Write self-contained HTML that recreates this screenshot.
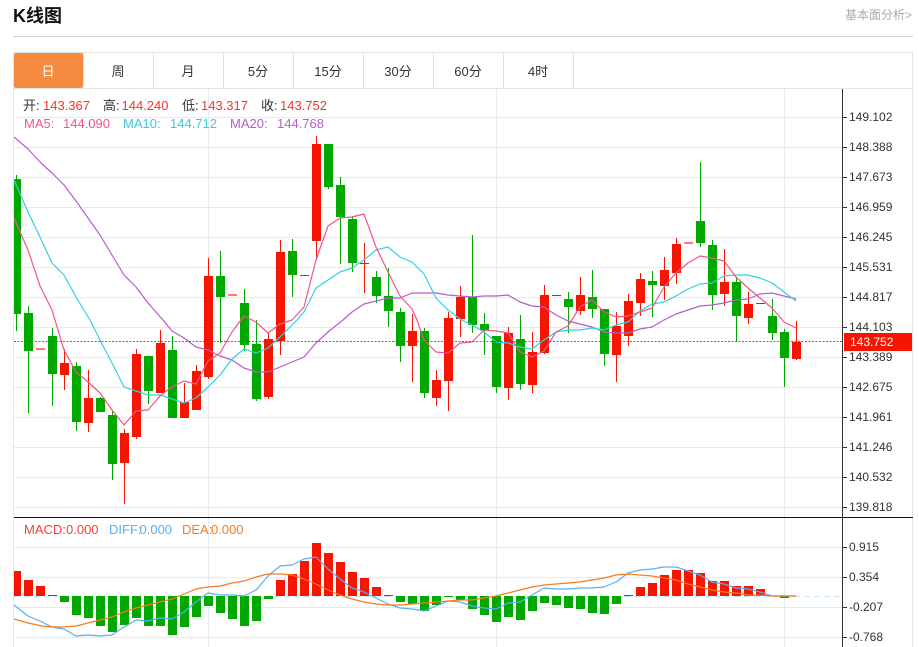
<!DOCTYPE html>
<html lang="zh"><head><meta charset="utf-8"><title>K线图</title>
<style>
html,body{margin:0;padding:0;background:#fff;width:919px;height:647px;overflow:hidden}
svg{display:block;font-family:"Liberation Sans","Noto Sans CJK SC",sans-serif}
.ax text{font-size:12px;fill:#333}
.tb text{font-size:13px;fill:#333;text-anchor:middle}
.l text{font-size:13px}
</style></head><body>
<svg width="919" height="647" viewBox="0 0 919 647" xmlns="http://www.w3.org/2000/svg">
<defs><clipPath id="c"><rect x="14" y="89" width="828" height="558"/></clipPath></defs>
<text x="13" y="22" font-size="18" font-weight="bold" fill="#111">K线图</text>
<text x="845" y="19" font-size="12" fill="#aaa">基本面分析&gt;</text>
<path d="M13 36.500H913" stroke="#d2d2d2" fill="none"/>
<!-- frame and tabs -->
<path d="M13.500 647V52.500H912.500V647M14 88.500H912" stroke="#e3e3e3" fill="none"/>
<rect x="14" y="53" width="69" height="35" rx="2" fill="#f48b40"/>
<path d="M83.500 53V88M153.500 53V88M223.500 53V88M293.500 53V88M363.500 53V88M433.500 53V88M503.500 53V88M573.500 53V88" stroke="#e0e0e0" fill="none"/>
<g class="tb">
<text x="48" y="76" style="fill:#fff">日</text><text x="118" y="76">周</text><text x="188" y="76">月</text><text x="258" y="76">5分</text><text x="328" y="76">15分</text><text x="398" y="76">30分</text><text x="468" y="76">60分</text><text x="538" y="76">4时</text>
</g>
<!-- grid -->
<path d="M14 117.500H842M14 147.500H842M14 177.500H842M14 207.500H842M14 237.500H842M14 267.500H842M14 297.500H842M14 327.500H842M14 357.500H842M14 387.500H842M14 417.500H842M14 447.500H842M14 477.500H842M14 507.500H842M14 547.500H842M14 577.500H842M14 607.500H842M14 637.500H842M208.500 89V647M496.500 89V647M784.500 89V647" stroke="#e4ebf2" fill="none"/>
<g clip-path="url(#c)">
<!-- green wicks -->
<path d="M16.500 175V331M28.500 306V413M52.500 328V406M76.500 362V431M100.500 397V412M112.500 411V480M148.500 356V404M172.500 336V418M220.500 251V343M244.500 289V351M256.500 320V401M292.500 239V297M328.500 144V189M340.500 177V264M352.500 216V272M376.500 271V303M388.500 268V327M400.500 308V362M424.500 328V398M472.500 235V333M484.500 313V355M496.500 336V393M520.500 315V390M568.500 292V333M592.500 270V318M604.500 309V366M652.500 271V317M700.500 162V247M712.500 240V310M736.500 278V342M772.500 299V340M784.500 329V387" stroke="#00a800" fill="none"/>
<!-- red wicks -->
<path d="M64.500 349V390M88.500 370V432M124.500 429V504M136.500 349V439M160.500 330V393M184.500 383V418M196.500 365V410M208.500 258V379M268.500 332V399M280.500 240V355M316.500 136V260M364.500 243V293M412.500 314V382M436.500 370V406M448.500 312V411M460.500 286V337M508.500 327V400M532.500 332V393M544.500 285V354M580.500 277V315M616.500 312V382M628.500 294V346M640.500 273V316M664.500 257V300M676.500 238V284M724.500 249V306M748.500 292V324M796.500 321V360" stroke="#f51500" fill="none"/>
<!-- green bodies -->
<path fill="#00a800" d="M12 179h9v135h-9zM24 313h9v38h-9zM48 336h9v38h-9zM72 366h9v56h-9zM96 398h9v14h-9zM108 415h9v49h-9zM144 356h9v35h-9zM168 350h9v68h-9zM216 276h9v21h-9zM240 303h9v42h-9zM252 344h9v55h-9zM288 251h9v24h-9zM324 144h9v43h-9zM336 185h9v32h-9zM348 219h9v44h-9zM372 277h9v19h-9zM384 296h9v15h-9zM396 312h9v34h-9zM420 331h9v62h-9zM468 297h9v28h-9zM480 324h9v6h-9zM492 336h9v51h-9zM516 339h9v45h-9zM564 299h9v8h-9zM588 297h9v12h-9zM600 309h9v45h-9zM648 281h9v4h-9zM696 221h9v22h-9zM708 245h9v50h-9zM732 282h9v34h-9zM768 316h9v17h-9zM780 332h9v26h-9z"/>
<!-- red bodies -->
<path fill="#f51500" d="M60 363h9v12h-9zM84 398h9v25h-9zM120 433h9v30h-9zM132 354h9v83h-9zM156 343h9v50h-9zM180 402h9v16h-9zM192 371h9v39h-9zM204 276h9v101h-9zM264 339h9v58h-9zM276 252h9v89h-9zM312 144h9v97h-9zM408 331h9v15h-9zM432 380h9v18h-9zM444 318h9v63h-9zM456 297h9v22h-9zM504 333h9v55h-9zM528 352h9v33h-9zM540 295h9v58h-9zM576 295h9v16h-9zM612 326h9v29h-9zM624 301h9v35h-9zM636 279h9v24h-9zM660 270h9v16h-9zM672 244h9v29h-9zM720 282h9v12h-9zM744 304h9v14h-9zM792 342h9v17h-9z"/>
<!-- dojis -->
<path fill="#f77" d="M36 348h9v2h-9zM228 294h9v2h-9zM684 242h9v2h-9z"/>
<path fill="#f51500" d="M300 275h9v1h-9zM360 263h9v1h-9zM552 295h9v1h-9zM756 303h9v1h-9z"/>
<!-- MA lines -->
<g fill="none" stroke-width="1.200" stroke-linejoin="round">
<polyline stroke="#b45fcb" points="14,137 28,149 40,162 52,173 64,185 76,201 88,218 100,235 112,255 124,275 136,287 148,303 163,320 172,331 184,338 196,347 208,350 220,356 232,360 244,368 256,372 268,372 280,367 292,362 304,357 316,343 328,332 343,320 352,312 364,304 376,301 388,298 400,298 412,293 424,293 436,293 448,295 460,296 472,297 484,296 496,296 508,295 520,302 532,306 544,307 556,315 568,321 580,324 592,327 604,332 616,333 628,333 640,329 652,327 664,320 676,314 688,310 700,306 712,305 724,303 736,300 748,299 760,294 772,293 784,296 796,299"/>
<polyline stroke="#36cfe0" points="14,180 28,212 40,237 52,263 64,275 76,297 90,320 100,340 112,363 124,387 136,391 148,395 160,395 172,399 184,403 196,398 208,387 220,375 232,359 244,349 256,353 268,348 280,337 297,320 304,312 316,288 328,280 340,272 352,268 364,260 376,250 388,247 400,257 412,262 424,274 436,298 448,310 460,319 472,325 484,332 496,342 508,343 520,347 532,349 544,340 556,332 568,330 580,330 592,328 604,330 616,325 628,322 640,311 652,304 664,302 676,296 688,289 700,284 712,283 724,276 736,275 748,275 760,278 772,283 784,292 796,301"/>
<polyline stroke="#f0558c" points="14,218 28,250 40,286 52,310 55,320 64,350 76,372 88,382 100,393 112,410 124,425 136,411 148,410 160,396 172,387 184,381 196,384 208,361 220,353 232,332 244,316 256,322 268,333 280,324 292,320 304,307 316,260 328,226 340,218 352,217 364,214 376,247 388,272 400,296 412,309 417,320 424,340 436,352 448,353 460,343 472,342 484,330 496,331 508,333 520,352 532,357 544,351 556,332 568,326 580,307 592,300 604,312 616,317 628,316 640,312 652,308 664,287 676,273 688,263 700,256 712,258 724,261 736,277 748,288 760,298 772,308 784,322 796,328"/>
</g>
<!-- price line -->
<path d="M14 341.500H842" stroke="#f51500" stroke-dasharray="2 1.500" fill="none" opacity=".85"/>
<!-- MACD -->
<path d="M14 596.500H842" stroke="#bfe3f7" stroke-dasharray="6 4" fill="none"/>
<path fill="#f51500" d="M12 571h9v25h-9zM24 580h9v16h-9zM36 586h9v10h-9zM48 595h9v1h-9zM276 580h9v16h-9zM288 574h9v22h-9zM300 561h9v35h-9zM312 543h9v53h-9zM324 553h9v43h-9zM336 562h9v34h-9zM348 572h9v24h-9zM360 578h9v18h-9zM372 587h9v9h-9zM384 595h9v1h-9zM624 595h9v1h-9zM636 587h9v9h-9zM648 583h9v13h-9zM660 575h9v21h-9zM672 570h9v26h-9zM684 570h9v26h-9zM696 573h9v23h-9zM708 581h9v15h-9zM720 581h9v15h-9zM732 586h9v10h-9zM744 586h9v10h-9zM756 589h9v7h-9z"/>
<path fill="#00a800" d="M60 596h9v6h-9zM72 596h9v19h-9zM84 596h9v22h-9zM96 596h9v30h-9zM108 596h9v36h-9zM120 596h9v29h-9zM132 596h9v22h-9zM144 596h9v30h-9zM156 596h9v30h-9zM168 596h9v39h-9zM180 596h9v31h-9zM192 596h9v21h-9zM204 596h9v10h-9zM216 596h9v17h-9zM228 596h9v23h-9zM240 596h9v30h-9zM252 596h9v25h-9zM264 596h9v3h-9zM396 596h9v6h-9zM408 596h9v8h-9zM420 596h9v15h-9zM432 596h9v9h-9zM444 596h9v1h-9zM456 596h9v4h-9zM468 596h9v13h-9zM480 596h9v19h-9zM492 596h9v26h-9zM504 596h9v21h-9zM516 596h9v24h-9zM528 596h9v15h-9zM540 596h9v7h-9zM552 596h9v9h-9zM564 596h9v12h-9zM576 596h9v13h-9zM588 596h9v17h-9zM600 596h9v18h-9zM612 596h9v8h-9zM780 596h9v2h-9z"/>
<g fill="none" stroke-width="1.200" stroke-linejoin="round">
<polyline stroke="#5aaef3" points="14,605 28,616 42,622 52,627 64,629 76,636 88,635 100,636 112,635 124,627 136,620 148,621 160,618 172,619 184,612 196,602 208,593 220,595 232,595 244,596 256,590 268,576 280,566 292,565 304,559 316,557 328,569 340,579 352,588 364,592 376,598 388,604 400,608 412,609 424,611 436,606 448,601 460,602 472,606 484,608 496,609 508,603 520,602 532,595 544,588 556,589 568,589 580,588 592,588 604,587 616,582 628,573 640,570 652,569 664,567 676,567 688,571 700,575 712,582 724,584 736,588 748,589 760,592 772,596 784,596 796,596"/>
<polyline stroke="#f87b1e" points="14,619 28,623 42,626 52,627 64,627 76,626 88,623 100,620 112,617 124,612 136,608 148,605 160,602 172,599 184,594 196,589 208,587 220,586 232,583 244,581 256,577 268,574 280,574 292,575 304,579 316,584 328,590 340,595 352,599 364,602 376,604 388,605 400,605 412,604 424,603 436,602 448,601 460,600 472,600 484,598 496,596 508,593 520,590 532,587 544,585 556,584 568,583 580,582 592,580 604,578 616,575 628,574 640,575 652,576 664,578 676,580 688,584 700,587 712,590 724,592 736,593 748,595 760,595 772,596 784,596 796,596"/>
</g>
</g>
<!-- separators/axis -->
<path d="M14 517.500H913" stroke="#111" fill="none"/>
<path d="M842.500 89V647" stroke="#333" fill="none"/>
<path d="M842 117.500h5M842 147.500h5M842 177.500h5M842 207.500h5M842 237.500h5M842 267.500h5M842 297.500h5M842 327.500h5M842 357.500h5M842 387.500h5M842 417.500h5M842 447.500h5M842 477.500h5M842 507.500h5M842 547.500h5M842 577.500h5M842 607.500h5M842 637.500h5" stroke="#333" fill="none"/>
<g class="ax">
<text x="849" y="121">149.102</text><text x="849" y="151">148.388</text><text x="849" y="181">147.673</text><text x="849" y="211">146.959</text><text x="849" y="241">146.245</text><text x="849" y="271">145.531</text><text x="849" y="301">144.817</text><text x="849" y="331">144.103</text><text x="849" y="361">143.389</text><text x="849" y="391">142.675</text><text x="849" y="421">141.961</text><text x="849" y="451">141.246</text><text x="849" y="481">140.532</text><text x="849" y="511">139.818</text>
<text x="849" y="551">0.915</text><text x="849" y="581">0.354</text><text x="849" y="611">-0.207</text><text x="849" y="641">-0.768</text>
</g>
<rect x="844" y="333" width="68" height="18" fill="#f51500"/>
<text x="850" y="346" font-size="12" fill="#fff">143.752</text>
<!-- legends -->
<g class="l">
<g fill="#333"><text x="23" y="110">开:</text><text x="103" y="110">高:</text><text x="182" y="110">低:</text><text x="261" y="110">收:</text></g>
<g fill="#f5352a"><text x="43" y="110">143.367</text><text x="121.500" y="110">144.240</text><text x="201" y="110">143.317</text><text x="280" y="110">143.752</text></g>
<g fill="#f0558c"><text x="24" y="128">MA5:</text><text x="63" y="128">144.090</text></g>
<g fill="#36c8e0"><text x="123" y="128">MA10:</text><text x="170" y="128">144.712</text></g>
<g fill="#b45fcb"><text x="230" y="128">MA20:</text><text x="277" y="128">144.768</text></g>
<g fill="#f5403a"><text x="24" y="534">MACD:</text><text x="66" y="534">0.000</text></g>
<g fill="#5aaef3"><text x="109" y="534">DIFF:</text><text x="139.500" y="534">0.000</text></g>
<g fill="#f87b1e"><text x="182" y="534">DEA:</text><text x="211" y="534">0.000</text></g>
</g>
</svg>
</body></html>
